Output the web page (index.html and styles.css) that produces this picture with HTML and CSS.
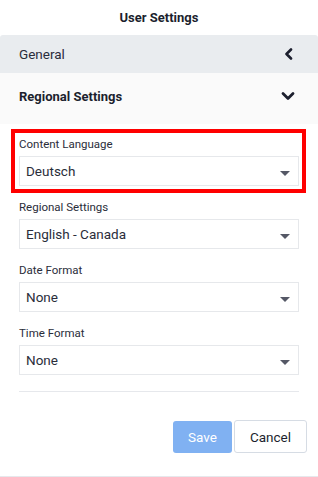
FILE: index.html
```html
<!DOCTYPE html>
<html lang="en">
	<head>
		<meta charset="UTF-8" />
		<meta name="viewport" content="width=device-width, initial-scale=1.0" />
		<title>User Settings</title>
		<link rel="stylesheet" href="styles.css">
	</head>
	<body>
		<div class="dialog">
			<div class="dialog-title">User Settings</div>

			<div class="section-head general">
				<span>General</span>
				<svg class="chevron" width="10" height="12" viewBox="0 0 10 12">
					<path d="M7 1.5 L2.5 6 L7 10.5" fill="none" stroke="#1c1f2e" stroke-width="2.6" stroke-linecap="round" stroke-linejoin="round"/>
				</svg>
			</div>

			<div class="section-head regional">
				<span>Regional Settings</span>
				<svg class="chevron" width="14" height="10" viewBox="0 0 14 10">
					<path d="M2 2.5 L7 7.5 L12 2.5" fill="none" stroke="#1c1f2e" stroke-width="2.8" stroke-linecap="round" stroke-linejoin="round"/>
				</svg>
			</div>

			<div class="section-body">
				<div class="field highlight">
					<label>Content Language</label>
					<div class="select">Deutsch<span class="caret"></span></div>
				</div>
				<div class="field">
					<label>Regional Settings</label>
					<div class="select">English - Canada<span class="caret"></span></div>
				</div>
				<div class="field">
					<label>Date Format</label>
					<div class="select">None<span class="caret"></span></div>
				</div>
				<div class="field">
					<label>Time Format</label>
					<div class="select">None<span class="caret"></span></div>
				</div>
				<hr class="divider">
			</div>

			<div class="actions">
				<button class="btn btn-save" disabled>Save</button>
				<button class="btn btn-cancel">Cancel</button>
			</div>
		</div>
	</body>
</html>
```

FILE: styles.css
```css
body {
	margin: 0;
	font-family: Roboto, "Liberation Sans", sans-serif;
	color: #1c1f2e;
	background: #fff;
}
.dialog {
	width: 318px;
	height: 477px;
	box-sizing: border-box;
	border-bottom: 1px solid #e6e8ec;
}
.dialog-title {
	height: 35px;
	line-height: 35px;
	text-align: center;
	font-size: 13px;
	font-weight: 700;
}
.section-head {
	display: flex;
	align-items: center;
	justify-content: space-between;
	padding: 0 24px 0 19px;
	font-size: 13.5px;
	box-sizing: border-box;
}
.section-head.general {
	height: 38px;
	background: #e9ecef;
	border-radius: 3px 3px 0 0;
	color: #2a2d3c;
}
.section-head.regional {
	height: 51px;
	padding-bottom: 5px;
	background: #fafafa;
	font-weight: 700;
	font-size: 13px;
	padding-right: 23px;
}
.chevron {
	display: block;
}
.section-body {
	padding: 13px 19px 0;
}
.field {
	position: relative;
	margin-bottom: 14px;
}
.field.highlight::after {
	content: "";
	position: absolute;
	top: -8px;
	left: -8px;
	right: -7px;
	bottom: -7px;
	border: 4px solid #f00;
	pointer-events: none;
}
.field label {
	display: block;
	font-size: 11.5px;
	line-height: 15px;
	margin-bottom: 4px;
	color: #2a2d3a;
}
.select {
	position: relative;
	height: 30px;
	box-sizing: border-box;
	border: 1px solid #e6e8eb;
	padding-left: 6px;
	line-height: 28px;
	font-size: 13.5px;
	color: #2a2d3a;
}
.caret {
	position: absolute;
	right: 8px;
	top: 14px;
	width: 0;
	height: 0;
	border-left: 5px solid transparent;
	border-right: 5px solid transparent;
	border-top: 5px solid #555866;
}
.divider {
	margin: 16px 0 0;
	border: none;
	border-top: 1px solid #e6e8ec;
}
.actions {
	display: flex;
	justify-content: flex-end;
	align-items: flex-start;
	gap: 2px;
	padding: 28px 11px 0 0;
}
.btn {
	font-family: Roboto, "Liberation Sans", sans-serif;
	font-size: 13.5px;
	border-radius: 3px;
	cursor: pointer;
}
.btn-save {
	width: 59px;
	height: 32px;
	margin-top: 1px;
	border: none;
	background: #80b1f2;
	color: #fff;
}
.btn-cancel {
	width: 73px;
	height: 33px;
	border: 1px solid #d6dce4;
	background: #fff;
	color: #1c1f2e;
}
```
